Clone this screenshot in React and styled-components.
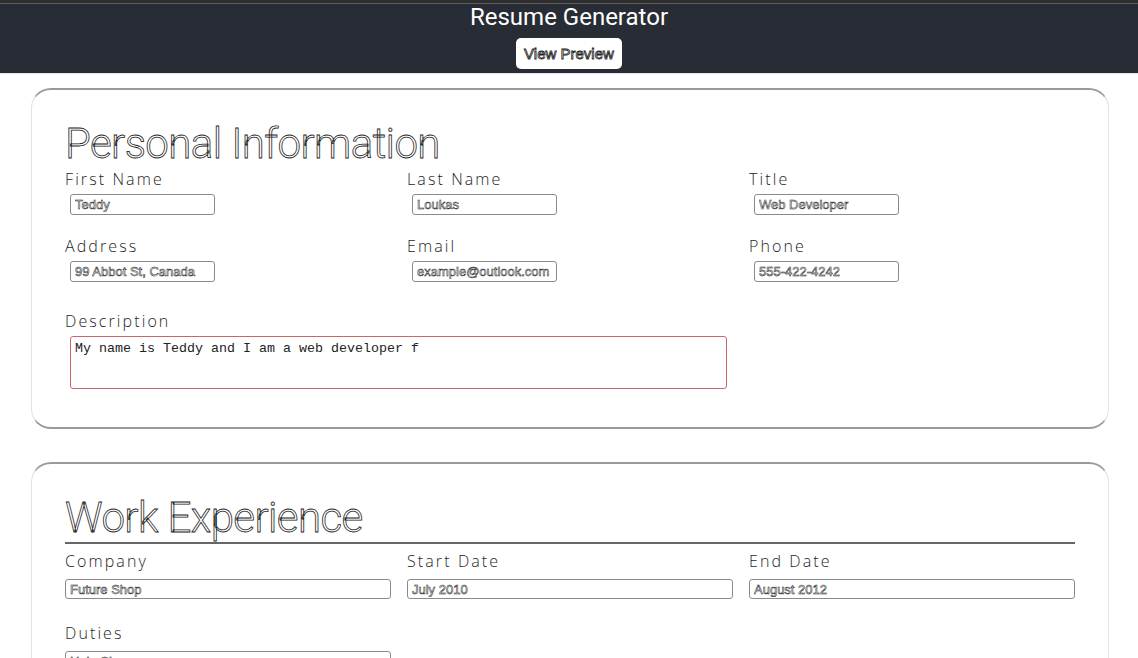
import React, { useEffect, useRef } from 'react';
import styled, { createGlobalStyle } from 'styled-components';

const GlobalStyle = createGlobalStyle`
  body {
    margin: 0;
    background: #fff;
    font-family: "Liberation Sans", Arial, sans-serif;
  }
`;

const Header = styled.header`
  background: #282c34;
  border-top: 3px solid #2e2e2e;
  box-shadow: inset 0 1px 0 #5c5c5c, 0 1px 0 #e4e4e4;
  height: 73px;
  display: flex;
  flex-direction: column;
  align-items: center;
  box-sizing: border-box;
`;

const Title = styled.h1`
  margin: 0;
  color: #fff;
  font-family: Roboto, "Liberation Sans", sans-serif;
  font-weight: 400;
  font-size: 24px;
  line-height: 28px;
`;

const PreviewButton = styled.button`
  margin-top: 7px;
  width: 106px;
  height: 31px;
  background: #fff;
  border: none;
  border-radius: 5px;
  font-family: "Liberation Sans", Arial, sans-serif;
  font-size: 15px;
  color: #fff;
  -webkit-text-stroke: 0.8px #222;
  padding: 0;
`;

const Main = styled.main`
  margin: 15px 29px 0 31px;
  display: flex;
  flex-direction: column;
  gap: 33px;
`;

const Card = styled.section`
  border: 1px solid #e2e2e2;
  border-top: 2px solid #9a9a9a;
  border-bottom: 2px solid #9a9a9a;
  border-radius: 20px;
  padding: 30px 33px 38px 33px;
`;

const SectionTitle = styled.h2`
  margin: 0;
  font-family: Roboto, "Liberation Sans", sans-serif;
  font-weight: 300;
  font-size: 42px;
  line-height: 48px;
  color: #fff;
  -webkit-text-stroke: 0.8px #222;
  letter-spacing: -0.6px;
  border-bottom: ${(p) => (p.$underline ? '2px solid #666' : 'none')};
  margin-bottom: ${(p) => (p.$underline ? '6px' : '0')};
`;

const FieldGrid = styled.div`
  display: grid;
  grid-template-columns: repeat(3, 1fr);
  column-gap: 16px;
  row-gap: ${(p) => p.$rowGap}px;
`;

const Field = styled.div`
  display: flex;
  flex-direction: column;
  align-items: flex-start;
  grid-column: ${(p) => (p.$wide ? 'span 2' : 'auto')};
  margin-top: ${(p) => p.$push || 0}px;
`;

const Label = styled.label`
  font-family: "Open Sans", Lato, sans-serif;
  font-weight: 300;
  font-size: 16px;
  line-height: 22px;
  letter-spacing: 2.1px;
  color: #1e1e1e;
  margin-bottom: ${(p) => p.$gap}px;
`;

const TextInput = styled.input`
  box-sizing: border-box;
  width: ${(p) => (p.$full ? '100%' : '145px')};
  height: ${(p) => (p.$full ? 20 : 21)}px;
  margin-left: ${(p) => (p.$full ? 0 : 5)}px;
  border: 1px solid #8a8a8a;
  border-radius: 3px;
  padding: 0 4px;
  font-family: "Liberation Sans", Arial, sans-serif;
  font-size: 13px;
  color: #fff;
  -webkit-text-stroke: 0.5px #111;
  background: #fff;
  outline: none;
`;

const TextArea = styled.textarea`
  box-sizing: border-box;
  width: 657px;
  height: 53px;
  margin-left: 5px;
  border: 1px solid #c9686b;
  border-radius: 3px;
  padding: 4px 4px;
  font-family: "Liberation Mono", "Courier New", monospace;
  font-size: 13.33px;
  color: #222;
  caret-color: #111;
  resize: none;
  outline: none;
`;

const personal = [
  ['First Name', 'Teddy'],
  ['Last Name', 'Loukas'],
  ['Title', 'Web Developer'],
  ['Address', '99 Abbot St, Canada'],
  ['Email', 'example@outlook.com'],
  ['Phone', '555-422-4242'],
];

const work = [
  ['Company', 'Future Shop'],
  ['Start Date', 'July 2010'],
  ['End Date', 'August 2012'],
];

const description = 'My name is Teddy and I am a web developer f';

export default function App() {
  const descRef = useRef(null);

  useEffect(() => {
    const el = descRef.current;
    if (el) {
      el.focus();
      el.setSelectionRange(description.length, description.length);
    }
  }, []);

  return (
    <>
      <GlobalStyle />
      <Header>
        <Title>Resume Generator</Title>
        <PreviewButton>View Preview</PreviewButton>
      </Header>
      <Main>
        <Card>
          <SectionTitle>Personal Information</SectionTitle>
          <FieldGrid $rowGap={20}>
            {personal.map(([label, value]) => (
              <Field key={label}>
                <Label $gap={4}>{label}</Label>
                <TextInput defaultValue={value} />
              </Field>
            ))}
            <Field $wide $push={8}>
              <Label $gap={4}>Description</Label>
              <TextArea ref={descRef} defaultValue={description} />
            </Field>
          </FieldGrid>
        </Card>
        <Card>
          <SectionTitle $underline>Work Experience</SectionTitle>
          <FieldGrid $rowGap={23}>
            {work.map(([label, value]) => (
              <Field key={label}>
                <Label $gap={7}>{label}</Label>
                <TextInput $full defaultValue={value} />
              </Field>
            ))}
            <Field>
              <Label $gap={7}>Duties</Label>
              <TextInput $full defaultValue="Help Shoppers" />
            </Field>
          </FieldGrid>
        </Card>
      </Main>
    </>
  );
}
